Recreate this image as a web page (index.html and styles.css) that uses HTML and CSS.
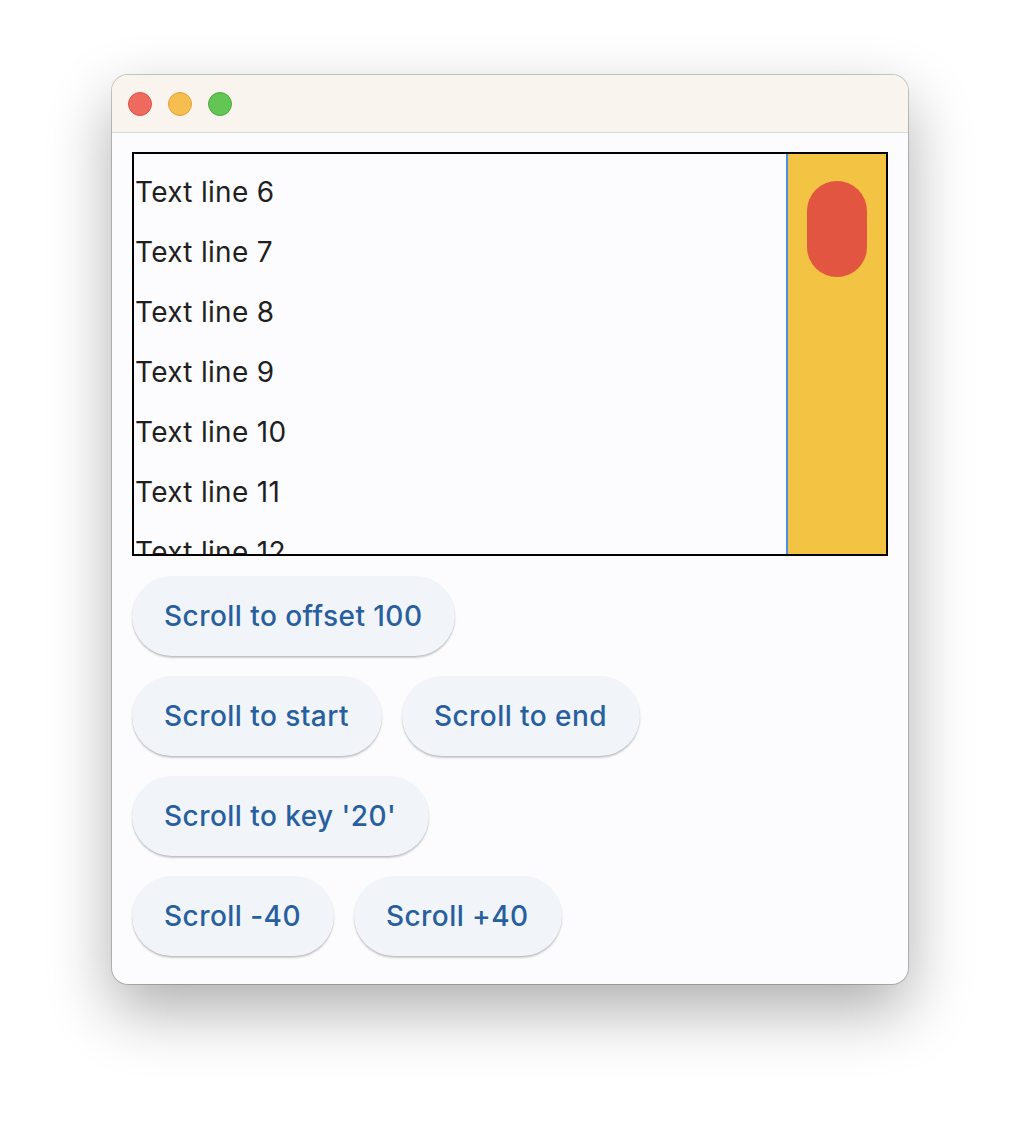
FILE: index.html
```html
<!DOCTYPE html>
<html>
<head>
<meta charset="utf-8">
<link rel="stylesheet" href="styles.css">
</head>
<body>
<div class="window">
  <div class="titlebar">
    <span class="light red"></span>
    <span class="light yellow"></span>
    <span class="light green"></span>
  </div>
  <div class="content">
    <div class="scrollbox">
      <div class="list">
        <div class="line">Text line 6</div>
        <div class="line">Text line 7</div>
        <div class="line">Text line 8</div>
        <div class="line">Text line 9</div>
        <div class="line">Text line 10</div>
        <div class="line">Text line 11</div>
        <div class="line">Text line 12</div>
      </div>
      <div class="track"><div class="thumb"></div></div>
    </div>
    <div class="row"><button class="btn">Scroll to offset 100</button></div>
    <div class="row"><button class="btn">Scroll to start</button><button class="btn">Scroll to end</button></div>
    <div class="row"><button class="btn">Scroll to key '20'</button></div>
    <div class="row"><button class="btn">Scroll -40</button><button class="btn">Scroll +40</button></div>
  </div>
</div>
</body>
</html>
```
FILE: styles.css
```css
html, body { margin: 0; padding: 0; background: #ffffff; }
body { padding-top: 75px; height: 1057px; overflow: hidden; }
.window {
  margin-left: 112px;
  width: 796px;
  height: 909px;
  border-radius: 16px;
  background: #fcfcfe;
  box-shadow: 0 0 0 1px rgba(0,0,0,0.2), 0 26px 64px rgba(0,0,0,0.32);
  overflow: hidden;
  display: flex;
  flex-direction: column;
}
.titlebar {
  height: 57px;
  background: #f9f4ee;
  border-bottom: 1px solid #dedad8;
  display: flex;
  align-items: center;
  padding-left: 16px;
  gap: 16px;
}
.light { width: 24px; height: 24px; border-radius: 50%; box-sizing: border-box; }
.red { background: #ee6a5f; border: 1px solid #d85448; }
.yellow { background: #f5be4f; border: 1px solid #dea33a; }
.green { background: #62c554; border: 1px solid #4eab3f; }
.content {
  padding: 19px 20px 20px;
  display: flex;
  flex-direction: column;
  gap: 20px;
}
.scrollbox {
  width: 756px;
  height: 404px;
  box-sizing: border-box;
  border: 2px solid #000;
  display: flex;
  overflow: hidden;
}
.list {
  flex: 1;
  padding-top: 8px;
  overflow: hidden;
  border-right: 2px solid #4a90e2;
}
.line {
  height: 60px;
  line-height: 60px;
  font-family: Inter, "Liberation Sans", sans-serif;
  font-size: 28px;
  letter-spacing: 0.3px;
  color: #1f1f1f;
  padding-left: 1px;
  white-space: nowrap;
}
.track {
  width: 98px;
  background: #f3c343;
  display: flex;
  justify-content: center;
  padding-top: 27px;
}
.thumb {
  width: 60px;
  height: 96px;
  border-radius: 30px;
  background: #e25541;
}
.row { display: flex; gap: 20px; }
.btn {
  height: 80px;
  border: none;
  border-radius: 40px;
  padding: 0 33px 0 32px;
  background: #f1f4f9;
  color: #285f9f;
  font-family: Inter, "Liberation Sans", sans-serif;
  font-weight: 500;
  font-size: 28px;
  letter-spacing: 0.45px;
  box-shadow: 0 2px 2px rgba(0,0,0,0.18), 0 1px 1px rgba(0,0,0,0.08);
}
```
